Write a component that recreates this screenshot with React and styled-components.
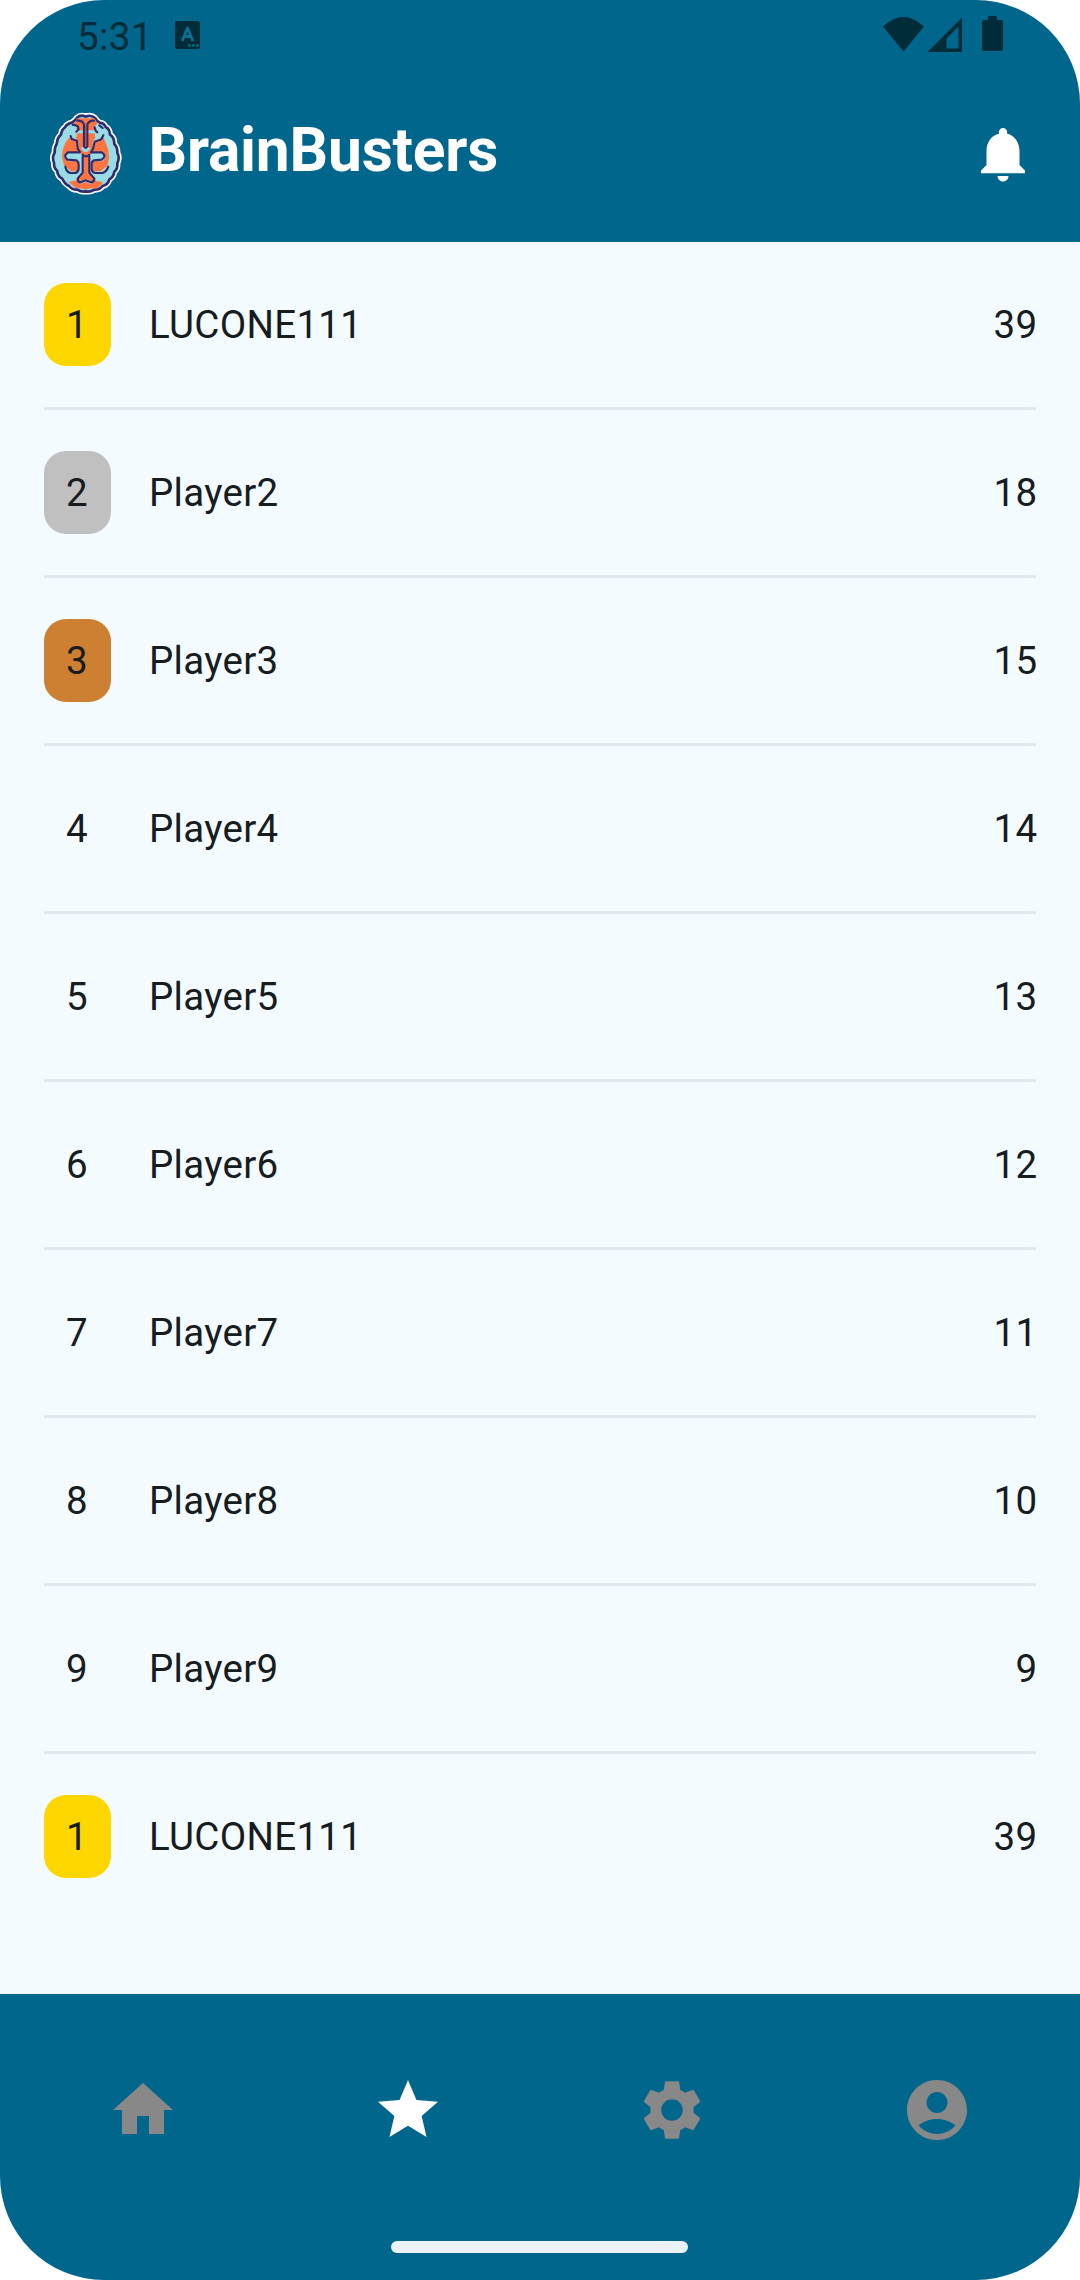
import React from "react";
import styled, { createGlobalStyle } from "styled-components";

const GlobalStyle = createGlobalStyle`
  * { box-sizing: border-box; }
  body { margin: 0; background: #fff; }
`;

const Screen = styled.div`
  display: flex;
  flex-direction: column;
  width: 1080px;
  height: 2280px;
  overflow: hidden;
  border-radius: 104px;
  background: #f3fbff;
  color: #171c1f;
  font-family: Roboto, "Liberation Sans", sans-serif;
`;

const Top = styled.header`
  flex: none;
  height: 242px;
  background: #00668b;
`;

const StatusBar = styled.div`
  display: flex;
  align-items: center;
  height: 68px;
  padding: 0 77px 0 77px;
  color: #002b39;
`;

const Clock = styled.div`
  flex: 1;
  display: flex;
  align-items: center;
  gap: 22.5px;
  padding-top: 2px;
`;

const Time = styled.span`
  padding-top: 4px;
  font-size: 38.5px;
  line-height: 44px;
  letter-spacing: 0.4px;
`;

const AppBar = styled.div`
  display: flex;
  align-items: center;
  height: 172px;
  padding: 0 44px 0 40px;
`;

const Title = styled.h1`
  flex: 1;
  margin: 0 0 0 18.5px;
  padding-bottom: 8px;
  color: #fff;
  font-size: 60.5px;
  line-height: 77px;
  font-weight: 700;
  letter-spacing: -0.2px;
`;

const Icon = styled.svg`
  display: block;
  flex: none;
  width: ${(p) => p.$w}px;
  height: ${(p) => p.$h || p.$w}px;
  fill: currentColor;
`;

const Logo = styled(Icon)`
  margin-bottom: 4px;
`;

const Board = styled.ol`
  flex: 1;
  margin: 0;
  padding: 0 44px;
  list-style: none;
`;

const Row = styled.li`
  display: flex;
  align-items: center;
  padding: 41px 0;
  font-size: 38.5px;
  letter-spacing: 0.3px;
  border-bottom: 3px solid #e0e8f0;
  &:last-child { border-bottom: 0; }
`;

const Rank = styled.span`
  width: 67px;
  height: 83px;
  line-height: 83px;
  margin-right: 38px;
  padding-right: 1px;
  border-radius: 22px;
  text-align: center;
  background: ${(p) => p.$medal || "transparent"};
`;

const Name = styled.span`
  flex: 1;
`;

const Score = styled.span`
  margin-right: -1.4px;
  text-align: right;
`;

const BottomBar = styled.footer`
  flex: none;
  display: flex;
  flex-direction: column;
  align-items: center;
  justify-content: space-between;
  height: 286px;
  padding-bottom: 27px;
  background: #00668b;
`;

const Tabs = styled.nav`
  display: flex;
  width: 100%;
  height: 232px;
  padding: 0 10.5px;
`;

const Tab = styled.div`
  flex: 1;
  display: flex;
  align-items: center;
  justify-content: center;
  color: ${(p) => (p.$active ? "#fff" : "#888")};
`;

const Handle = styled.div`
  width: 297px;
  height: 12px;
  margin-right: 1px;
  border-radius: 6px;
  background: #ebf3f7;
`;

const medals = { 1: "#ffd700", 2: "#c0c0c0", 3: "#cd7f32" };

const players = [
  [1, "LUCONE111", 39],
  [2, "Player2", 18],
  [3, "Player3", 15],
  [4, "Player4", 14],
  [5, "Player5", 13],
  [6, "Player6", 12],
  [7, "Player7", 11],
  [8, "Player8", 10],
  [9, "Player9", 9],
  [1, "LUCONE111", 39],
];

const tabs = [
  { id: "home", d: "M10 20v-6h4v6h5v-8h3L12 3 2 12h3v8z" },
  {
    id: "ranking",
    active: true,
    d: "M12 17.27L18.18 21l-1.64-7.03L22 9.24l-7.19-.61L12 2 9.19 8.63 2 9.24l5.46 4.73L5.82 21z",
  },
  {
    id: "settings",
    d: "M19.14 12.94c.04-.3.06-.61.06-.94 0-.32-.02-.64-.07-.94l2.03-1.58c.18-.14.23-.41.12-.61l-1.92-3.32c-.12-.22-.37-.29-.59-.22l-2.39.96c-.5-.38-1.03-.7-1.62-.94l-.36-2.54c-.04-.24-.24-.41-.48-.41h-3.84c-.24 0-.43.17-.47.41l-.36 2.54c-.59.24-1.13.57-1.62.94l-2.39-.96c-.22-.08-.47 0-.59.22L2.74 8.87c-.12.21-.08.47.12.61l2.03 1.58c-.05.3-.09.63-.09.94s.02.64.07.94l-2.03 1.58c-.18.14-.23.41-.12.61l1.92 3.32c.12.22.37.29.59.22l2.39-.96c.5.38 1.03.7 1.62.94l.36 2.54c.05.24.24.41.48.41h3.84c.24 0 .44-.17.47-.41l.36-2.54c.59-.24 1.13-.56 1.62-.94l2.39.96c.22.08.47 0 .59-.22l1.92-3.32c.12-.22.07-.47-.12-.61l-2.01-1.58zM12 15.6c-1.98 0-3.6-1.62-3.6-3.6s1.62-3.6 3.6-3.6 3.6 1.62 3.6 3.6-1.62 3.6-3.6 3.6z",
  },
  {
    id: "account",
    d: "M12 2C6.48 2 2 6.48 2 12s4.48 10 10 10 10-4.48 10-10S17.52 2 12 2zm0 4c1.93 0 3.5 1.57 3.5 3.5S13.93 13 12 13s-3.5-1.57-3.5-3.5S10.07 6 12 6zm0 14c-2.03 0-4.43-.82-6.14-2.88C7.55 15.8 9.68 15 12 15s4.45.8 6.14 2.12C16.43 19.18 14.03 20 12 20z",
  },
];

const brainEdge =
  "M137 50Q122 43 111 53Q105 62 97 67Q80 71 75 82Q65 88 63 104Q52 112 50 132Q43 142 44 158Q35 172 42 188Q41 204 51 212Q54 230 67 236Q74 252 87 258Q97 270 112 269Q124 277 137 274Q152 277 163 269Q179 270 188 258Q204 254 208 238Q221 231 223 215Q234 206 232 190Q240 174 232 158Q233 142 223 132Q223 112 210 104Q209 86 197 81Q192 69 179 68Q171 64 165 54Q153 43 137 50Z";

function Brain() {
  return (
    <Logo $w={90} $h={105} viewBox="0 0 270 315">
      <g strokeLinejoin="round" strokeLinecap="round">
        <path d={brainEdge} fill="#fff" stroke="#fff" strokeWidth="18" />
        <path d={brainEdge} fill="#9adce3" stroke="#2f2d70" strokeWidth="8" />
        <g fill="#ff7440">
          <path d="M112 55h52l8 16-8 8v12h-54V79l-8-8z" />
          <path d="M112 100h52l2 14-8 10v30l-10 12v48l16 20-6 10-20-6-20 6-8-10 18-20v-48l-12-12v-30l-8-10z" />
          <path d="M92 108l8 12 12 4 3 32H84l-10 8v10l10 10h26l8 10v12l-8 8H94l-22-18-6-24 2-22 8-22z" />
          <path d="M188 108l-10 14-12 6-8 28h28l10 8v10l-8 10h-26l-8 10v12l8 8h20l21-18 4-24-2-22-8-22z" />
          <path d="M86 246l26-6 10 12 15-6 16 6 10-10 26 4-6 10-14 10-18-1-14 4-14-4-16-1z" />
        </g>
        <path d="M83 168h32q7 1 7 9v34M188 168h-29q-6 1-6 9v34" fill="none" stroke="#9adce3" strokeWidth="11" />
        <path d="M128 146q9 12 18 0" fill="none" stroke="#9adce3" strokeWidth="9" />
        <g fill="none" stroke="#2f2d70" strokeWidth="6.5">
          <path d="M112 62q14-2 20 11v66q5 9 10 0V73q6-12 20-11" />
          <path d="M137 78v58" stroke="#a8553f" strokeWidth="3" />
          <path d="M98 74l15 4 3 10-7 7M92 108l3 9 16 5 2 24 7 10" />
          <path d="M164 82q2 12 8 15M178 76l10 8M190 106l-6 12-20 7-5 22-6 10" />
          <path d="M119 157H84q-16 11-2 22l28 2q6 4 6 14v12q-2 11-11 12H91q-12-4-15-19" />
          <path d="M155 157h30q17 11 0 22l-24 2q-7 4-6 14v12q1 11 11 12h22q12-4 17-19" />
          <path d="M128 164q10 10 20 0M128 168v50l-15 18q0 11 9 11l15-6 16 6q10-1 10-11l-15-18v-50" />
        </g>
      </g>
    </Logo>
  );
}

export default function App() {
  return (
    <>
      <GlobalStyle />
      <Screen>
        <Top>
          <StatusBar>
            <Clock>
              <Time>5:31</Time>
              <Icon $w={25} $h={28} viewBox="0 0 25 28">
                <rect width="25" height="28" rx="2.5" />
                <path d="M7.5 19l5-12 5 12M9.5 15.5h6" fill="none" stroke="#0b7193" strokeWidth="2.8" strokeLinecap="round" strokeLinejoin="round" />
                <path d="M13.3 24.500h2.2M17.3 24.500h2.2M21.3 24.500h2.2" stroke="#0b7193" strokeWidth="2.4" />
              </Icon>
            </Clock>
            <Icon $w={120} $h={36} viewBox="0 0 120 36">
              <path d="M0 10.5Q20.5-8.500 41 10.500L20.500 35.500z" />
              <path fillRule="evenodd" d="M79 1.500V36H44.500zM75.500 10.500L63.500 22.500V32.500h12z" />
              <path d="M105 0h9v4h4q2 0 2 2v27q0 2-2 2h-17q-2 0-2-2V6q0-2 2-2h4z" />
            </Icon>
          </StatusBar>
          <AppBar>
            <Brain />
            <Title>BrainBusters</Title>
            <Icon $w={66} viewBox="0 0 24 24" color="#fff">
              <path d="M12 22c1.100 0 2-.9 2-2h-4c0 1.100.89 2 2 2zm6-6v-5c0-3.070-1.640-5.640-4.500-6.320V4c0-.83-.67-1.500-1.500-1.500s-1.500.67-1.500 1.500v.68C7.630 5.360 6 7.920 6 11v5l-2 2v1h16v-1l-2-2z" />
            </Icon>
          </AppBar>
        </Top>
        <Board>
          {players.map(([rank, name, score], i) => (
            <Row key={i}>
              <Rank $medal={medals[rank]}>{rank}</Rank>
              <Name>{name}</Name>
              <Score>{score}</Score>
            </Row>
          ))}
        </Board>
        <BottomBar>
          <Tabs>
            {tabs.map((tab) => (
              <Tab key={tab.id} $active={tab.active}>
                <Icon $w={72} viewBox="0 0 24 24">
                  <path d={tab.d} />
                </Icon>
              </Tab>
            ))}
          </Tabs>
          <Handle />
        </BottomBar>
      </Screen>
    </>
  );
}
